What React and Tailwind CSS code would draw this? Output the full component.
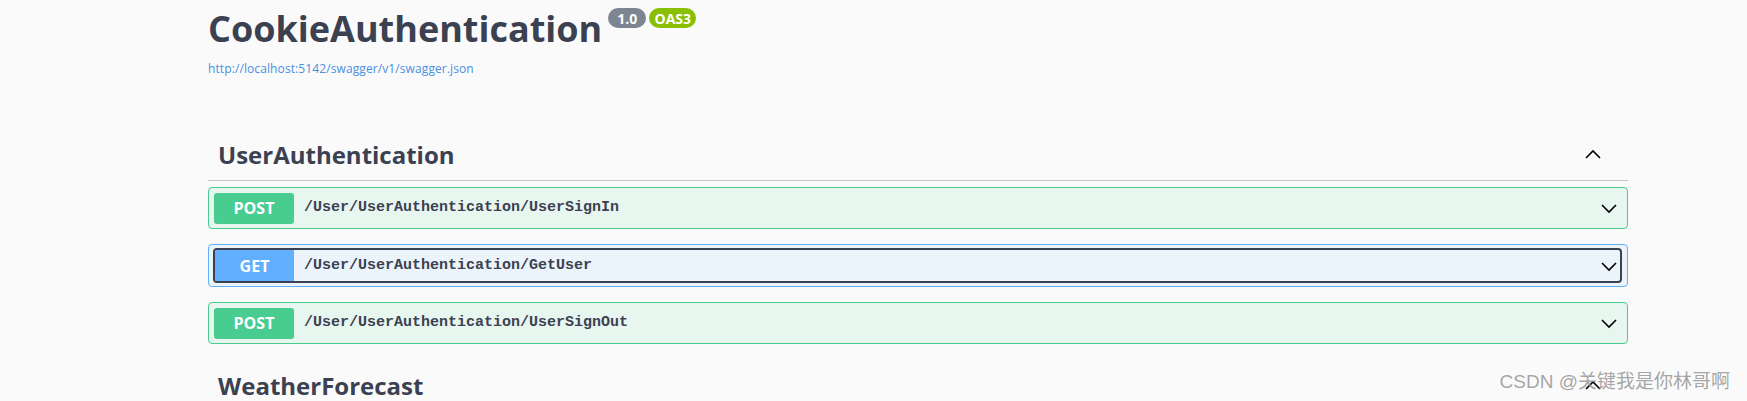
import React from "react";

const Chevron = ({ up = false, className = "" }) => (
  <svg viewBox="0 0 20 20" className={className} fill="none">
    <path
      d={up ? "M3 13l7-7 7 7" : "M3 7l7 7 7-7"}
      stroke="#000"
      strokeWidth="1.6"
    />
  </svg>
);

const methods = {
  POST: {
    box: "border-[#49cc90] bg-[#e8f6f0]",
    badge: "bg-[#49cc90]",
  },
  GET: {
    box: "border-[#61affe] bg-[#ebf3fb]",
    badge: "bg-[#61affe]",
  },
};

const OpBlock = ({ method, path, focused }) => {
  const m = methods[method];
  return (
    <div className={`border rounded-[4px] mb-[15px] ${m.box} ${focused ? "h-[43px] p-[3px_5px_3px_4px]" : "h-[42px] p-[4px_5px]"}`}>
      <div
        className={`flex items-center h-full ${
          focused ? "border-2 border-[#3b4151] rounded-[4px]" : ""
        }`}
      >
        <div
          className={`${m.badge} ${focused ? "w-[79px] h-full rounded-l-[2px]" : "w-[80px] h-[31px] rounded-[3px]"} flex items-center justify-center text-white text-[16px] font-bold`}
        >
          {method}
        </div>
        <div className="flex-1 pl-[10px] pt-[1px] font-['Liberation_Mono',monospace] font-bold text-[15px] text-[#3b4151]">
          {path}
        </div>
        <Chevron className={`w-[20px] h-[20px] ${focused ? "mr-[1px]" : "mr-[3px]"}`} />
      </div>
    </div>
  );
};

export default function App() {
  return (
    <div className="relative min-h-[401px] bg-[#fafafa] overflow-hidden font-['Open_Sans',sans-serif] text-[#3b4151]">
      <div className="ml-[208px] w-[1420px]">
        {/* info */}
        <div className="flex items-start h-[58px]">
          <h1 className="text-[36px] leading-[58px] font-bold">CookieAuthentication</h1>
          <div className="flex gap-[3px] ml-[6px] mt-[8px]">
            <span className="h-[20px] w-[38px] rounded-full bg-[#7d8492] text-white text-[14px] font-bold flex items-center justify-center">
              1.0
            </span>
            <span className="h-[20px] w-[47px] rounded-full bg-[#89bf04] text-white text-[14px] font-bold flex items-center justify-center">
              OAS3
            </span>
          </div>
        </div>
        <a className="block text-[12px] tracking-[0.1px] leading-[16px] mt-[3px] text-[#4990e2]">
          http://localhost:5142/swagger/v1/swagger.json
        </a>

        {/* UserAuthentication */}
        <div className="mt-[53px] h-[51px] flex items-center justify-between border-b border-[#c4c6cb] pl-[10px] pr-[25px] mb-[6px]">
          <h3 className="text-[24px] font-bold">UserAuthentication</h3>
          <Chevron up className="w-[20px] h-[20px]" />
        </div>
        <OpBlock method="POST" path="/User/UserAuthentication/UserSignIn" />
        <OpBlock method="GET" path="/User/UserAuthentication/GetUser" focused />
        <OpBlock method="POST" path="/User/UserAuthentication/UserSignOut" />

        {/* WeatherForecast */}
        <div className="h-[54px] flex items-center justify-between pl-[10px] pr-[25px]">
          <h3 className="text-[24px] font-bold">WeatherForecast</h3>
          <Chevron up className="w-[20px] h-[20px]" />
        </div>
      </div>

      <div className="absolute right-[17px] top-[368px] text-[19px] text-[#9a9a9a]/90 font-['Liberation_Sans','Noto_Sans_CJK_SC',sans-serif]">
        CSDN @关键我是你林哥啊
      </div>
    </div>
  );
}
